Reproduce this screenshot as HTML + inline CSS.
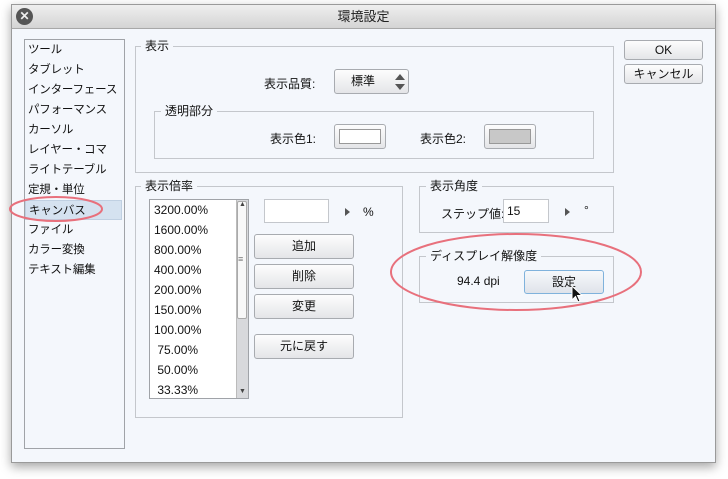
<!DOCTYPE html>
<html><head><meta charset="utf-8"><style>
*{box-sizing:border-box;margin:0;padding:0}
body{width:728px;height:479px;background:#fff;font-family:"Liberation Sans","Noto Sans CJK JP",sans-serif;font-size:12px;color:#111;position:relative;overflow:hidden}
.a{position:absolute}
.win{left:11px;top:4px;width:705px;height:459px;background:#f4f7fc;border:1px solid #9a9a9a;box-shadow:0 4px 10px rgba(0,0,0,.35)}
.title{left:11px;top:4px;width:705px;height:25px;background:linear-gradient(#efefef,#d4d4d4);border:1px solid #9a9a9a;border-bottom-color:#a8a8a8;text-align:center;line-height:24px;font-size:13px;color:#222}
.close{left:16px;top:8px;width:17px;height:17px;border-radius:50%;background:#555;color:#eee;font-size:12px;line-height:17px;text-align:center;font-weight:bold}
.grp{border:1px solid #c4c7cc}
.lbl{background:#f4f7fc;padding:0 4px;line-height:14px}
.btn{border:1px solid #a8abb0;border-radius:3px;background:linear-gradient(#fdfdfd,#e4e5e8);text-align:center}
.list{left:24px;top:39px;width:101px;height:410px;border:1px solid #a0a3a8;background:#f4f7fc}
.list div{height:20px;line-height:20px;padding-left:3px;font-size:11.5px;white-space:nowrap;letter-spacing:-0.2px}
.inp{background:#fff;border:1px solid #c4c7cc}
.tri{width:0;height:0;border-top:4px solid transparent;border-bottom:4px solid transparent;border-left:5px solid #555}
</style></head><body>
<div class="a win"></div>
<div class="a title">環境設定</div>
<div class="a close">✕</div>

<div class="a list">
<div>ツール</div><div>タブレット</div><div>インターフェース</div><div>パフォーマンス</div><div>カーソル</div><div>レイヤー・コマ</div><div>ライトテーブル</div><div>定規・単位</div><div style="background:#d5e2f0;border:1px solid #c0d0e2;margin-right:2px">キャンバス</div><div>ファイル</div><div>カラー変換</div><div>テキスト編集</div>
</div>

<!-- 表示 -->
<div class="a grp" style="left:135px;top:46px;width:479px;height:127px"></div>
<div class="a lbl" style="left:141px;top:39px">表示</div>
<div class="a" style="left:264px;top:75px">表示品質:</div>
<div class="a btn" style="left:334px;top:69px;width:75px;height:25px;line-height:23px;padding-left:16px;text-align:left">標準</div>
<svg class="a" style="left:393px;top:71px" width="14" height="22"><path d="M2 9 L7 3 L12 9Z M2 13 L7 19 L12 13Z" fill="#555"/></svg>
<div class="a grp" style="left:154px;top:111px;width:440px;height:48px"></div>
<div class="a lbl" style="left:161px;top:104px">透明部分</div>
<div class="a" style="left:270px;top:130px">表示色1:</div>
<div class="a btn" style="left:334px;top:124px;width:52px;height:25px;padding:4px"><div style="background:#fff;border:1px solid #999;height:15px"></div></div>
<div class="a" style="left:420px;top:130px">表示色2:</div>
<div class="a btn" style="left:484px;top:124px;width:52px;height:25px;padding:4px"><div style="background:#c8c8c8;border:1px solid #999;height:15px"></div></div>

<div class="a btn" style="left:624px;top:40px;width:79px;height:20px;line-height:18px">OK</div>
<div class="a btn" style="left:624px;top:64px;width:79px;height:20px;line-height:18px">キャンセル</div>

<!-- 表示倍率 -->
<div class="a grp" style="left:135px;top:186px;width:268px;height:232px"></div>
<div class="a lbl" style="left:141px;top:179px">表示倍率</div>
<div class="a inp" style="left:149px;top:199px;width:100px;height:200px;border-color:#a0a3a8;line-height:20px;padding-left:4px">
<div>3200.00%</div><div>1600.00%</div><div>800.00%</div><div>400.00%</div><div>200.00%</div><div>150.00%</div><div>100.00%</div><div>&nbsp;75.00%</div><div>&nbsp;50.00%</div><div>&nbsp;33.33%</div></div>
<div class="a" style="left:236px;top:200px;width:12px;height:198px;background:#d8d9dc;border-left:1px solid #bbb"></div>
<div class="a" style="left:237px;top:201px;width:10px;height:118px;background:#f8f8f8;border:1px solid #aaa;border-radius:2px"></div>
<div class="a" style="left:238px;top:254px;font-size:9px;color:#777">≡</div>
<div class="a" style="left:239px;top:201px;font-size:7px;color:#444">▲</div>
<div class="a" style="left:239px;top:388px;font-size:7px;color:#444">▼</div>
<div class="a inp" style="left:264px;top:199px;width:65px;height:24px"></div>
<div class="a tri" style="left:345px;top:208px"></div>
<div class="a" style="left:363px;top:205px">%</div>
<div class="a btn" style="left:254px;top:234px;width:100px;height:25px;line-height:23px">追加</div>
<div class="a btn" style="left:254px;top:264px;width:100px;height:25px;line-height:23px">削除</div>
<div class="a btn" style="left:254px;top:294px;width:100px;height:25px;line-height:23px">変更</div>
<div class="a btn" style="left:254px;top:334px;width:100px;height:25px;line-height:23px">元に戻す</div>

<!-- 表示角度 -->
<div class="a grp" style="left:419px;top:186px;width:195px;height:47px"></div>
<div class="a lbl" style="left:426px;top:179px">表示角度</div>
<div class="a" style="left:441px;top:205px">ステップ値:</div>
<div class="a inp" style="left:503px;top:199px;width:46px;height:24px;padding-left:3px;line-height:22px">15</div>
<div class="a tri" style="left:565px;top:208px"></div>
<div class="a" style="left:584px;top:203px">°</div>

<!-- ディスプレイ解像度 -->
<div class="a grp" style="left:419px;top:256px;width:195px;height:47px"></div>
<div class="a lbl" style="left:426px;top:249px">ディスプレイ解像度</div>
<div class="a" style="left:457px;top:274px">94.4 dpi</div>
<div class="a btn" style="left:524px;top:270px;width:80px;height:24px;line-height:22px;border-color:#7fb2dc;background:linear-gradient(#f6f8fb,#dfe3ea)">設定</div>
<svg class="a" style="left:571px;top:285px" width="14" height="20"><path d="M1 1 L1 15 L4.5 11.5 L7 17 L9 16 L6.5 10.5 L11 10.5Z" fill="#111" stroke="#fff" stroke-width="1"/></svg>

<svg class="a" style="left:0;top:0" width="728" height="479">
<ellipse cx="56" cy="209" rx="46" ry="12" fill="none" stroke="#e8707c" stroke-width="2"/>
<ellipse cx="516" cy="272" rx="125" ry="38" fill="none" stroke="#e8707c" stroke-width="2"/>
</svg>
</body></html>
